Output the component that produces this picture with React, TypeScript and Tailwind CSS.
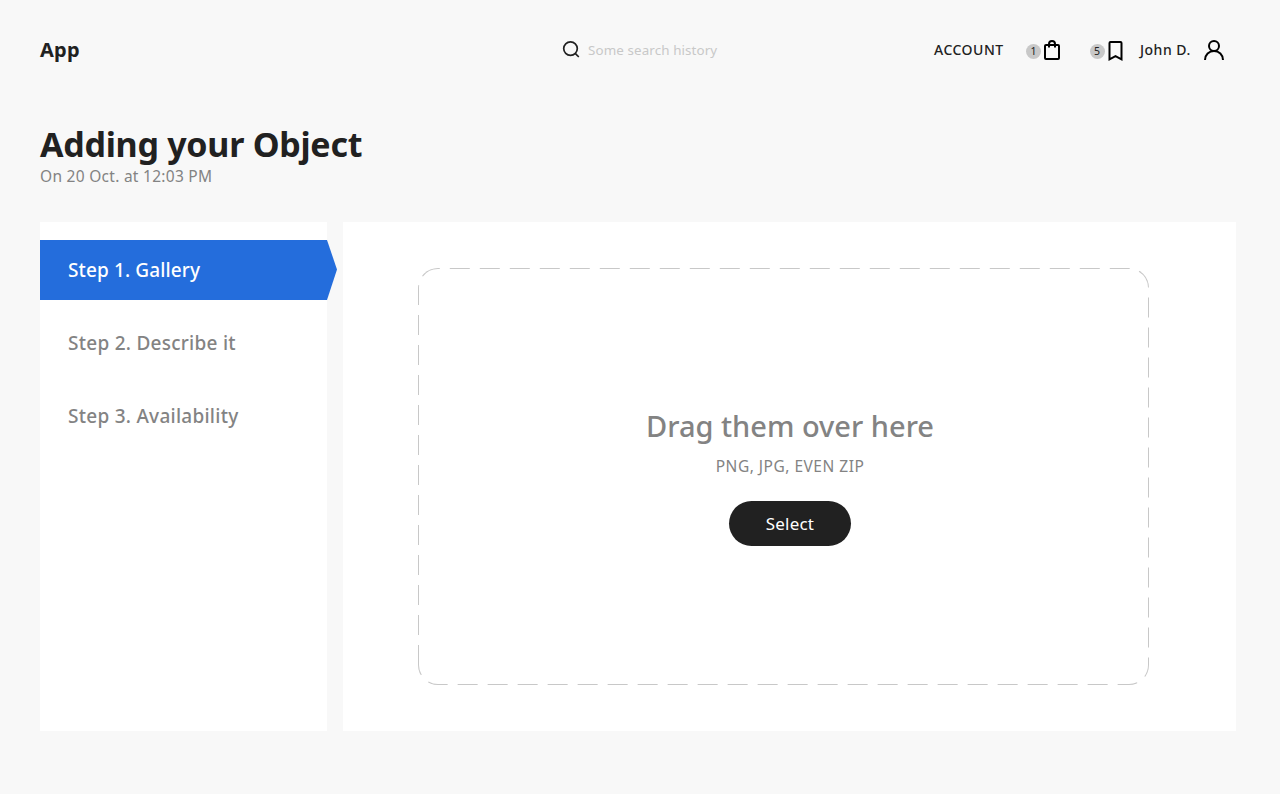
import React from "react";

const steps = ["Step 1. Gallery", "Step 2. Describe it", "Step 3. Availability"];

function SearchIcon() {
  return (
    <svg width="24" height="24" viewBox="0 0 24 24" fill="none" stroke="#212121" strokeWidth="1.7">
      <circle cx="11.5" cy="10.6" r="6.8" />
      <path d="M16.2 15.4L19.8 19" />
    </svg>
  );
}

function BagIcon() {
  return (
    <svg width="24" height="24" viewBox="0 0 24 24" fill="none" stroke="#000" strokeWidth="2">
      <rect x="4" y="7" width="14" height="14" rx="1" />
      <path d="M8 9.5V6a3 3 0 0 1 6 0v3.5" />
    </svg>
  );
}

function BookmarkIcon() {
  return (
    <svg width="24" height="24" viewBox="0 0 24 24" fill="none" stroke="#000" strokeWidth="2">
      <path d="M4.5 5a1 1 0 0 1 1-1h10a1 1 0 0 1 1 1v16.4l-6-3.2-6 3.2z" />
    </svg>
  );
}

function UserIcon() {
  return (
    <svg width="24" height="24" viewBox="0 0 24 24" fill="none" stroke="#000" strokeWidth="2">
      <circle cx="12" cy="8" r="5" />
      <path d="M3 22c0-5.2 4-9 9-9s9 3.8 9 9" />
    </svg>
  );
}

function Badge({ children }: { children: React.ReactNode }) {
  return (
    <span className="mt-[3px] flex size-[15px] items-center justify-center rounded-full bg-[#c8c8c8] text-[10.5px] leading-none">
      {children}
    </span>
  );
}

export default function App() {
  return (
    <div className="h-[794px] w-[1280px] overflow-hidden bg-[#f8f8f8] pl-10 pr-11 font-['Noto_Sans',sans-serif] text-[#212121]">
      <header className="flex h-[100px] items-center whitespace-nowrap">
        <div className="w-[519px] text-[20px] font-bold tracking-[0.2px]">App</div>
        <div className="flex w-[375px] items-center">
          <SearchIcon />
          <span className="ml-[5px] mt-px text-[13.4px] tracking-[0.1px] text-[#c8c8c8]">Some search history</span>
        </div>
        <span className="-mt-[2px] w-[92px] text-[14px] font-medium tracking-[0.5px]">ACCOUNT</span>
        <div className="flex w-[63.5px] items-center">
          <Badge>1</Badge>
          <BagIcon />
        </div>
        <div className="flex w-[50.5px] items-center">
          <Badge>5</Badge>
          <BookmarkIcon />
        </div>
        <span className="-mt-[2px] w-[62px] text-[14px] font-medium tracking-[0.5px]">John D.</span>
        <UserIcon />
      </header>

      <div className="h-[122px] whitespace-nowrap pt-[22px]">
        <h1 className="text-[34px] font-bold leading-[44px] tracking-[-0.27px]">Adding your Object</h1>
        <p className="-mt-px text-[15.5px] leading-[22px] tracking-[0.28px] text-[#838383]">On 20 Oct. at 12:03 PM</p>
      </div>

      <main className="flex h-[509px] gap-4">
        <nav className="flex w-[287px] flex-col gap-[13px] bg-white pt-[18px]">
          {steps.map((step, i) => (
            <div key={step} className="flex h-[60px]">
              <div
                className={
                  i === 0
                    ? "flex w-[287px] shrink-0 items-center bg-[#246ddc] pl-7 text-[19px] font-medium tracking-[0.12px] text-white"
                    : "flex w-[287px] shrink-0 items-center pl-7 text-[19px] font-medium tracking-[0.26px] text-[#838383]"
                }
              >
                {step}
              </div>
              {i === 0 && (
                <svg width="10" height="60" className="shrink-0" fill="#246ddc">
                  <path d="M0 0L10 29.5L0 60z" />
                </svg>
              )}
            </div>
          ))}
        </nav>

        <section className="w-[893px] bg-white pl-[75px] pt-[46px]">
          <div className="grid h-[417px] w-[731px]">
            <svg
              width="731"
              height="417"
              className="col-start-1 row-start-1 overflow-hidden rounded-[20px]"
              fill="none"
              stroke="#c8c8c8"
              strokeWidth="2"
              strokeDasharray="20 10"
            >
              <path d="M0 397V20A20 20 0 0 1 20 0H711A20 20 0 0 1 731 20V397A20 20 0 0 1 711 417H20A20 20 0 0 1 0 397" />
            </svg>
            <div className="col-start-1 row-start-1 flex flex-col items-center whitespace-nowrap pl-[13px] pt-[138px] text-[#838383]">
              <h2 className="text-[29px] font-medium leading-10">Drag them over here</h2>
              <p className="mt-[9px] text-[15.5px] leading-[22px] tracking-[0.5px]">PNG, JPG, EVEN ZIP</p>
              <button className="mt-6 h-[45px] w-[122px] rounded-full bg-[#212121] text-[17px] tracking-[0.2px] text-white">
                Select
              </button>
            </div>
          </div>
        </section>
      </main>
    </div>
  );
}
